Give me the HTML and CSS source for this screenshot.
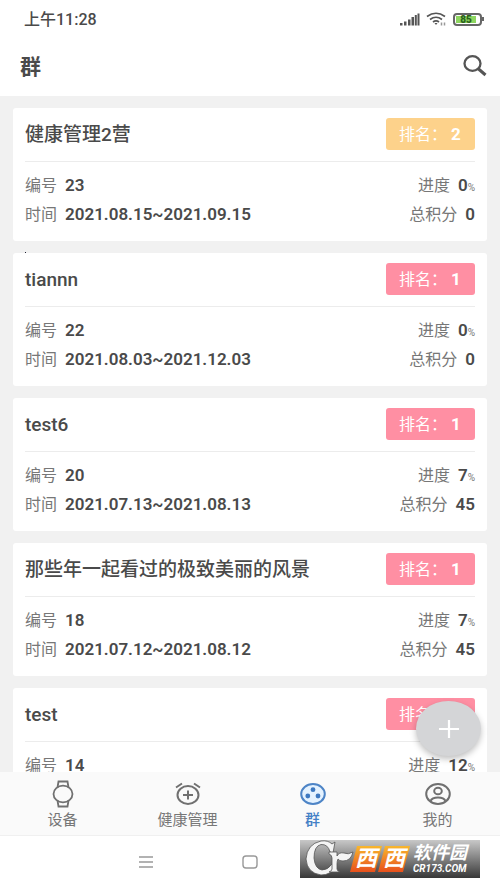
FILE: index.html
```html
<!DOCTYPE html>
<html lang="zh-CN">
<head>
<meta charset="utf-8">
<meta name="viewport" content="width=device-width, initial-scale=1">
<title>群</title>
<link rel="stylesheet" href="styles.css">
</head>
<body>
<div class="status">
  <span>上午11:28</span>
  <div class="status-icons">
    <svg width="20" height="13" viewBox="0 0 20 13" fill="#555"><path d="M0 10h2.500v2.500H0zM4 8.500h2.500v4H4zM8 6.500h2.500v6H8zM11.500 4H14v8.500h-2.500zM14.800 2h2v10.500h-2zM17.500 .5h2v12h-2z"/></svg>
    <svg width="21" height="14" viewBox="0 0 21 14" fill="none" stroke="#555" stroke-width="1.700"><path d="M1 4.500Q10 -2 19 4.500M4 7.500Q10 3 16 7.500M7 10Q10 7.600 13 10"/><path d="M8.500 11h3L10 13z" fill="#555" stroke="none"/><path d="M15.500 10.500v3M18.500 10.500v3" stroke="#999" stroke-width="1.500"/></svg>
    <span class="battery"><span class="battery-level">85</span></span>
  </div>
</div>
<header class="top">
  <h1>群</h1>
  <button class="plain" aria-label="搜索">
    <svg width="26" height="24" viewBox="0 0 26 24" fill="none" stroke="#555"><ellipse cx="10.500" cy="8.500" rx="8" ry="7.300" stroke-width="2.300"/><path d="M16 13.500l7.500 6.500" stroke-width="3"/></svg>
  </button>
</header>
<div class="content">
  <main class="list">
    <article class="card">
      <div class="card-head"><h2>健康管理2营</h2><span class="rank second">排名：<b>2</b></span></div>
      <div class="row"><span>编号<b>23</b></span><span>进度<b>0</b><small>%</small></span></div>
      <div class="row"><span>时间<b>2021.08.15~2021.09.15</b></span><span>总积分<b>0</b></span></div>
    </article>
    <article class="card speck">
      <div class="card-head"><h2>tiannn</h2><span class="rank">排名：<b>1</b></span></div>
      <div class="row"><span>编号<b>22</b></span><span>进度<b>0</b><small>%</small></span></div>
      <div class="row"><span>时间<b>2021.08.03~2021.12.03</b></span><span>总积分<b>0</b></span></div>
    </article>
    <article class="card">
      <div class="card-head"><h2>test6</h2><span class="rank">排名：<b>1</b></span></div>
      <div class="row"><span>编号<b>20</b></span><span>进度<b>7</b><small>%</small></span></div>
      <div class="row"><span>时间<b>2021.07.13~2021.08.13</b></span><span>总积分<b>45</b></span></div>
    </article>
    <article class="card">
      <div class="card-head"><h2>那些年一起看过的极致美丽的风景</h2><span class="rank">排名：<b>1</b></span></div>
      <div class="row"><span>编号<b>18</b></span><span>进度<b>7</b><small>%</small></span></div>
      <div class="row"><span>时间<b>2021.07.12~2021.08.12</b></span><span>总积分<b>45</b></span></div>
    </article>
    <article class="card">
      <div class="card-head"><h2>test</h2><span class="rank">排名：<b>1</b></span></div>
      <div class="row"><span>编号<b>14</b></span><span>进度<b>12</b><small>%</small></span></div>
    </article>
  </main>
  <button class="fab" aria-label="添加">
    <svg width="20" height="18" viewBox="0 0 20 18" stroke="#fff" stroke-width="2.200"><path d="M0 9h20M10 0v18"/></svg>
  </button>
</div>
<nav class="tabs">
  <a href="#device">
    <svg width="28" height="28" viewBox="0 0 28 28" fill="none" stroke="#707070" stroke-width="1.800"><ellipse cx="14" cy="14" rx="9.500" ry="8.300"/><path d="M8.500 7.500L9.500 1.500h9l1 6M8.500 20.500l1 6h9l1-6"/></svg>
    设备
  </a>
  <a href="#health">
    <svg width="28" height="28" viewBox="0 0 28 28" fill="none" stroke="#707070" stroke-width="2"><ellipse cx="14" cy="15" rx="10.500" ry="9"/><path d="M14 10.500v9M9 15h10M2 7.500l6-4M26 7.500l-6-4"/></svg>
    健康管理
  </a>
  <a href="#group" class="active">
    <svg width="28" height="28" viewBox="0 0 28 28" fill="#3d78c0"><ellipse cx="14" cy="14" rx="11.800" ry="10" fill="#e4f2ff" stroke="#4d84c6" stroke-width="2"/><circle cx="14" cy="9.700" r="2.400"/><circle cx="8.800" cy="16" r="2.400"/><circle cx="19" cy="16" r="2.400"/></svg>
    群
  </a>
  <a href="#mine">
    <svg width="28" height="28" viewBox="0 0 28 28" fill="none" stroke="#707070" stroke-width="2"><ellipse cx="14" cy="14" rx="11.800" ry="10"/><ellipse cx="14" cy="11" rx="3.800" ry="3.300"/><path d="M6.500 21Q8 17.500 14 17.500T21.500 21"/></svg>
    我的
  </a>
</nav>
<footer class="system">
  <button class="plain" aria-label="菜单"><svg width="16" height="14" viewBox="0 0 16 14" stroke="#999" stroke-width="1.300"><path d="M1 2h14M1 7h14M1 12h14"/></svg></button>
  <button class="plain" aria-label="主页"><svg width="16" height="14" viewBox="0 0 16 14" fill="none" stroke="#999" stroke-width="1.400"><rect x="1" y="1" width="14" height="12" rx="3"/></svg></button>
  <div class="mark">
    <svg width="54" height="38" viewBox="0 0 54 38" fill="#f4f4f4" stroke="#555" stroke-width=".8"><path d="M35 2L33 13L30 12Q28 4 21 4.500Q14 6 14 18Q15 29 22 30Q28 30 32 24L35 27Q31 35 21 35Q7 33 6 19Q7 4 21 1Q28 0 32 4Z"/><path d="M29 12h8v4q2-4 7-3q4 2 9-1q-2 9-10 9q-4 0-5-2q-1 2-1 5v5q0 2 3 3H29q3-1 3-3V18q0-3-3-4z"/></svg>
    <div class="tiles"><span class="tile">西</span><span class="tile">西</span></div>
    <div class="mark-name"><span>软件园</span><span class="mark-site">CR173.COM</span></div>
  </div>
</footer>
</body>
</html>
```
FILE: styles.css
```css
* { box-sizing: border-box; }
body {
  margin: 0;
  height: 100vh;
  display: flex;
  flex-direction: column;
  background: #fff;
  color: #4a4a4a;
  font: 16px/29px Roboto, "Noto Sans CJK SC", sans-serif;
}
h1, h2 { margin: 0; }
button { border: 0; padding: 0; cursor: pointer; }
svg { display: block; flex: none; }
.plain { background: none; display: flex; justify-content: center; }

.status {
  display: flex;
  justify-content: space-between;
  align-items: center;
  height: 38px;
  padding: 0 18px 0 24px;
  font-weight: 500;
}
.status-icons { display: flex; align-items: center; gap: 6px; }
.battery {
  position: relative;
  width: 29px;
  height: 13px;
  padding: 1px;
  border: 2px solid #666;
  border-radius: 4px;
}
.battery::after {
  content: "";
  position: absolute;
  right: -4px;
  top: 2px;
  width: 2px;
  height: 4px;
  background: #666;
}
.battery-level {
  display: block;
  height: 7px;
  width: 20px;
  background: #8ed660;
  color: #2c641c;
  font-size: 10px;
  font-weight: 900;
  line-height: 7px;
  text-align: center;
}
.top {
  display: flex;
  justify-content: space-between;
  align-items: center;
  height: 58px;
  padding: 0 12px 0 20px;
}
.top h1 { font-size: 21px; }

.content { position: relative; flex: 1; min-height: 0; background: #f1f1f1; }
.list {
  height: 100%;
  overflow: hidden;
  padding: 12px 13px 0;
  display: flex;
  flex-direction: column;
  gap: 12px;
}
.card {
  flex: none;
  position: relative;
  padding: 10px 12px 12px;
  background: #fff;
  border-radius: 3px;
}
.speck::before {
  content: "";
  position: absolute;
  left: 12px;
  top: -1px;
  width: 1px;
  height: 1px;
  background: #223;
}
.card-head {
  display: flex;
  justify-content: space-between;
  align-items: center;
  padding-bottom: 11px;
  margin-bottom: 9px;
  border-bottom: 1px solid #ececec;
}
.card-head h2 { font-size: 19px; font-weight: 500; }
.rank {
  width: 89px;
  height: 32px;
  background: #ff8fa3;
  color: #fff;
  border-radius: 3px;
  line-height: 32px;
  padding-left: 13px;
  white-space: nowrap;
}
.rank b { margin-left: 4px; font-size: 17px; }
.second { background: #fdd28b; }
.row { display: flex; justify-content: space-between; height: 29px; color: #777; }
.row b { margin-left: 8px; color: #4a4a4a; font-size: 17px; font-weight: 600; }
.row small { font-size: 10px; }
.fab {
  position: absolute;
  right: 19px;
  bottom: 16px;
  width: 65px;
  height: 55px;
  border-radius: 50%;
  background: #d4d5d7;
  box-shadow: 0 3px 6px rgba(0, 0, 0, .25);
  display: flex;
  align-items: center;
  justify-content: center;
}

.tabs {
  display: grid;
  grid-template-columns: repeat(4, 1fr);
  height: 64px;
  padding-top: 8px;
  background: #fafafa;
  border-bottom: 1px solid #f0f0f0;
}
.tabs a {
  display: flex;
  flex-direction: column;
  align-items: center;
  color: #777;
  font-size: 15px;
  line-height: 24px;
  text-decoration: none;
}
.tabs .active { color: #4480c6; font-weight: 500; }

.system {
  position: relative;
  display: grid;
  grid-template-columns: repeat(3, 104px);
  justify-content: center;
  align-items: center;
  height: 52px;
}
.mark {
  position: absolute;
  right: 20px;
  bottom: 10px;
  width: 180px;
  height: 38px;
  display: flex;
  align-items: center;
  background: linear-gradient(#c8c8c8, #383838);
  color: #fff;
}
.tiles { display: flex; margin-left: -4px; }
.tile {
  width: 32px;
  height: 26px;
  background: linear-gradient(#f8b72d, #e8501c);
  clip-path: polygon(22% 0, 100% 0, 78% 100%, 0 100%);
  font-size: 22px;
  font-weight: 700;
  font-style: italic;
  line-height: 26px;
  text-align: center;
}
.tile + .tile { margin-left: -4px; }
.mark-name {
  display: flex;
  flex-direction: column;
  margin-left: 3px;
  font-size: 18px;
  font-weight: 700;
  font-style: italic;
  line-height: 20px;
  white-space: nowrap;
}
.mark-site { font-size: 10px; line-height: 12px; }
```
